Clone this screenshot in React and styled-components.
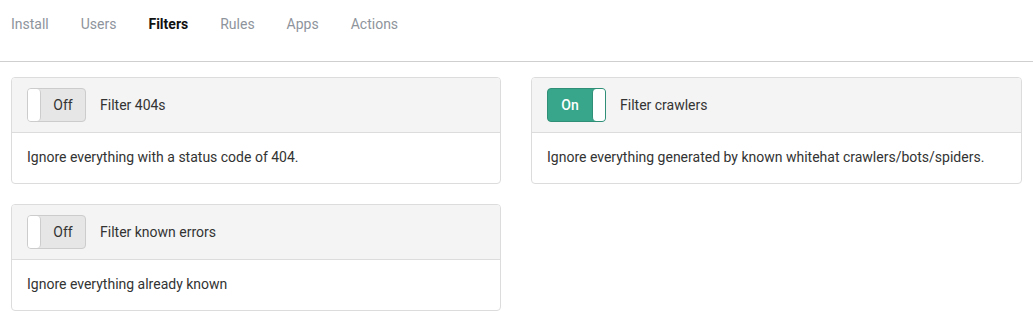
import React, { useState } from "react";
import styled, { createGlobalStyle } from "styled-components";

const Global = createGlobalStyle`
  body { margin: 0; background: #fff; font-family: Roboto, "Liberation Sans", Arial, sans-serif; font-size: 14px; color: #333; }
`;

const Nav = styled.nav`
  display: flex;
  gap: 32px;
  padding: 14px 0 0 11px;
  box-sizing: border-box;
  border-bottom: 1px solid #cfcfcf;
  height: 62px;
`;

const NavItem = styled.a`
  font-size: 14px;
  line-height: 20px;
  color: ${(p) => (p.$active ? "#111" : "#8e949c")};
  font-weight: ${(p) => (p.$active ? 700 : 400)};
  cursor: pointer;
`;

const Grid = styled.div`
  display: grid;
  grid-template-columns: 490px 491px;
  column-gap: 30px;
  row-gap: 20px;
  padding: 15px 0 0 11px;
  align-items: start;
`;

const Card = styled.div`
  border: 1px solid #dcdcdc;
  border-radius: 4px;
  background: #fff;
  overflow: hidden;
`;

const CardHeader = styled.div`
  display: flex;
  align-items: center;
  gap: 14px;
  padding: 10px 15px;
  background: #f4f4f4;
  border-bottom: 1px solid #dcdcdc;
`;

const CardBody = styled.div`
  padding: 14px 15px 16px;
  line-height: 20px;
  color: #333;
`;

const Toggle = styled.button`
  display: flex;
  flex-direction: ${(p) => (p.$on ? "row-reverse" : "row")};
  width: 59px;
  height: 34px;
  padding: 0;
  border: 1px solid ${(p) => (p.$on ? "#2f8f77" : "#cccccc")};
  border-radius: 4px;
  background: ${(p) => (p.$on ? "#38a68b" : "#e6e6e6")};
  overflow: hidden;
  cursor: pointer;
  box-sizing: border-box;
`;

const Knob = styled.span`
  width: 12px;
  height: 100%;
  background: #fff;
  border-radius: ${(p) => (p.$on ? "4px 0 0 4px" : "0 4px 4px 0")};
  border-${(p) => (p.$on ? "left" : "right")}: 1px solid ${(p) => (p.$on ? "#2f8f77" : "#cccccc")};
`;

const ToggleText = styled.span`
  flex: 1;
  display: flex;
  align-items: center;
  justify-content: center;
  font-family: Roboto, "Liberation Sans", Arial, sans-serif;
  font-size: 14px;
  font-weight: ${(p) => (p.$on ? 500 : 400)};
  color: ${(p) => (p.$on ? "#fff" : "#333")};
`;

const Label = styled.span`
  line-height: 20px;
  color: #333;
`;

const filtersInit = [
  { id: "404", title: "Filter 404s", desc: "Ignore everything with a status code of 404.", on: false },
  { id: "crawl", title: "Filter crawlers", desc: "Ignore everything generated by known whitehat crawlers/bots/spiders.", on: true },
  { id: "known", title: "Filter known errors", desc: "Ignore everything already known", on: false },
];

export default function App() {
  const [filters, setFilters] = useState(filtersInit);
  const tabs = ["Install", "Users", "Filters", "Rules", "Apps", "Actions"];
  return (
    <>
      <Global />
      <Nav>
        {tabs.map((t) => (
          <NavItem key={t} $active={t === "Filters"}>{t}</NavItem>
        ))}
      </Nav>
      <Grid>
        {filters.map((f) => (
          <Card key={f.id}>
            <CardHeader>
              <Toggle
                $on={f.on}
                onClick={() =>
                  setFilters((fs) => fs.map((x) => (x.id === f.id ? { ...x, on: !x.on } : x)))
                }
              >
                <Knob $on={f.on} />
                <ToggleText $on={f.on}>{f.on ? "On" : "Off"}</ToggleText>
              </Toggle>
              <Label>{f.title}</Label>
            </CardHeader>
            <CardBody>{f.desc}</CardBody>
          </Card>
        ))}
      </Grid>
    </>
  );
}
